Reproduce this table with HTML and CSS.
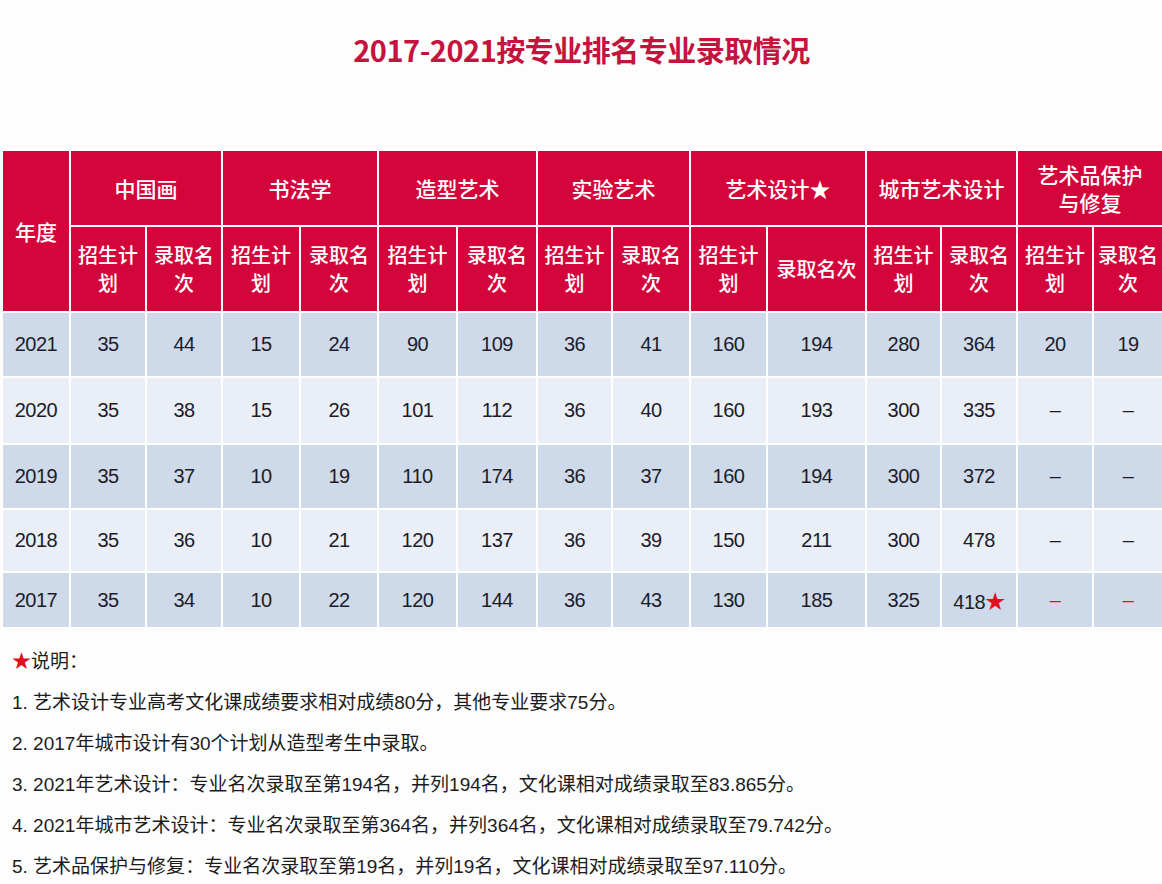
FILE: index.html
```html
<!DOCTYPE html>
<html lang="zh-CN">
<head>
<meta charset="utf-8">
<title>2017-2021按专业排名专业录取情况</title>
<link rel="stylesheet" href="styles.css">
</head>
<body>
<div class="page">
  <h1 class="title">2017-2021按专业排名专业录取情况</h1>
  <table class="grid">
    <colgroup>
      <col class="c-year">
      <col class="c76"><col class="c76">
      <col class="c78"><col class="c78">
      <col class="c79"><col class="c80">
      <col class="c75"><col class="c78">
      <col class="c77"><col class="c99">
      <col class="c75"><col class="c76">
      <col class="c76"><col class="c-last">
    </colgroup>
    <thead>
      <tr class="h1">
        <th rowspan="2">年度</th>
        <th colspan="2">中国画</th>
        <th colspan="2">书法学</th>
        <th colspan="2">造型艺术</th>
        <th colspan="2">实验艺术</th>
        <th colspan="2">艺术设计★</th>
        <th colspan="2">城市艺术设计</th>
        <th colspan="2">艺术品保护<br>与修复</th>
      </tr>
      <tr class="h2">
        <th>招生计划</th><th>录取名次</th>
        <th>招生计划</th><th>录取名次</th>
        <th>招生计划</th><th>录取名次</th>
        <th>招生计划</th><th>录取名次</th>
        <th>招生计划</th><th class="nowrap">录取名次</th>
        <th>招生计划</th><th>录取名次</th>
        <th>招生计划</th><th>录取名次</th>
      </tr>
    </thead>
    <tbody>
      <tr class="r1 dark">
        <td>2021</td><td>35</td><td>44</td><td>15</td><td>24</td><td>90</td><td>109</td><td>36</td><td>41</td><td>160</td><td>194</td><td>280</td><td>364</td><td>20</td><td>19</td>
      </tr>
      <tr class="r2 light">
        <td>2020</td><td>35</td><td>38</td><td>15</td><td>26</td><td>101</td><td>112</td><td>36</td><td>40</td><td>160</td><td>193</td><td>300</td><td>335</td><td>–</td><td>–</td>
      </tr>
      <tr class="r3 dark">
        <td>2019</td><td>35</td><td>37</td><td>10</td><td>19</td><td>110</td><td>174</td><td>36</td><td>37</td><td>160</td><td>194</td><td>300</td><td>372</td><td>–</td><td>–</td>
      </tr>
      <tr class="r4 light">
        <td>2018</td><td>35</td><td>36</td><td>10</td><td>21</td><td>120</td><td>137</td><td>36</td><td>39</td><td>150</td><td>211</td><td>300</td><td>478</td><td>–</td><td>–</td>
      </tr>
      <tr class="r5 dark">
        <td>2017</td><td>35</td><td>34</td><td>10</td><td>22</td><td>120</td><td>144</td><td>36</td><td>43</td><td>130</td><td>185</td><td>325</td><td>418<span class="star">★</span></td><td class="red">–</td><td class="red">–</td>
      </tr>
    </tbody>
  </table>
  <div class="notes">
    <p><span class="star">★</span>说明：</p>
    <p>1. 艺术设计专业高考文化课成绩要求相对成绩80分，其他专业要求75分。</p>
    <p>2. 2017年城市设计有30个计划从造型考生中录取。</p>
    <p>3. 2021年艺术设计：专业名次录取至第194名，并列194名，文化课相对成绩录取至83.865分。</p>
    <p>4. 2021年城市艺术设计：专业名次录取至第364名，并列364名，文化课相对成绩录取至79.742分。</p>
    <p>5. 艺术品保护与修复：专业名次录取至第19名，并列19名，文化课相对成绩录取至97.110分。</p>
  </div>
</div>
</body>
</html>
```

FILE: styles.css
```css
html, body {
  margin: 0;
  padding: 0;
  background: #fdfdfd;
}
body {
  width: 1162px;
  height: 884px;
  overflow: hidden;
  font-family: "Liberation Sans", "Noto Sans CJK SC", sans-serif;
  color: #1c1c28;
}
.page {
  padding-left: 1px;
}
.title {
  margin: 0;
  height: 149px;
  padding-top: 29px;
  box-sizing: border-box;
  text-align: center;
  font-family: "Noto Sans CJK SC", sans-serif;
  font-size: 29px;
  line-height: 40px;
  font-weight: 700;
  color: #c4143e;
  letter-spacing: -0.5px;
}
.grid {
  border-collapse: collapse;
  table-layout: fixed;
  width: 1163px;
}
.c-year { width: 68px; }
.c75 { width: 75px; }
.c76 { width: 76px; }
.c77 { width: 77px; }
.c78 { width: 78px; }
.c79 { width: 79px; }
.c80 { width: 80px; }
.c99 { width: 99px; }
.c-last { width: 70px; }
.grid th, .grid td {
  border: 2px solid #ffffff;
  text-align: center;
  padding: 0;
}
.grid th {
  background: #d3053b;
  color: #ffffff;
  font-family: "Noto Sans CJK SC", sans-serif;
  font-weight: 500;
}
.grid tr.h1 th {
  height: 74px;
  font-size: 21px;
  line-height: 28px;
}
.grid tr.h2 th {
  height: 84px;
  font-size: 20px;
  line-height: 28px;
  padding: 0;
}
.grid tr.h2 th.nowrap {
  white-space: nowrap;
}
.grid td {
  font-size: 20px;
  letter-spacing: -0.5px;
}
.grid tr.dark td { background: #cedaea; }
.grid tr.light td { background: #e9eef7; }
.grid tr.r1 td { height: 63px; }
.grid tr.r2 td { height: 65px; }
.grid tr.r3 td { height: 63px; }
.grid tr.r4 td { height: 61px; }
.grid tr.r5 td { height: 54px; }
.star { color: #e0101e; }
.red { color: #e0101e; }
.notes {
  padding: 12px 0 0 11px;
  font-family: "Liberation Sans", "Noto Sans CJK SC", sans-serif;
  font-size: 19px;
  line-height: 41px;
  color: #1c1c1c;
}
.notes p {
  margin: 0;
  white-space: nowrap;
}
```
